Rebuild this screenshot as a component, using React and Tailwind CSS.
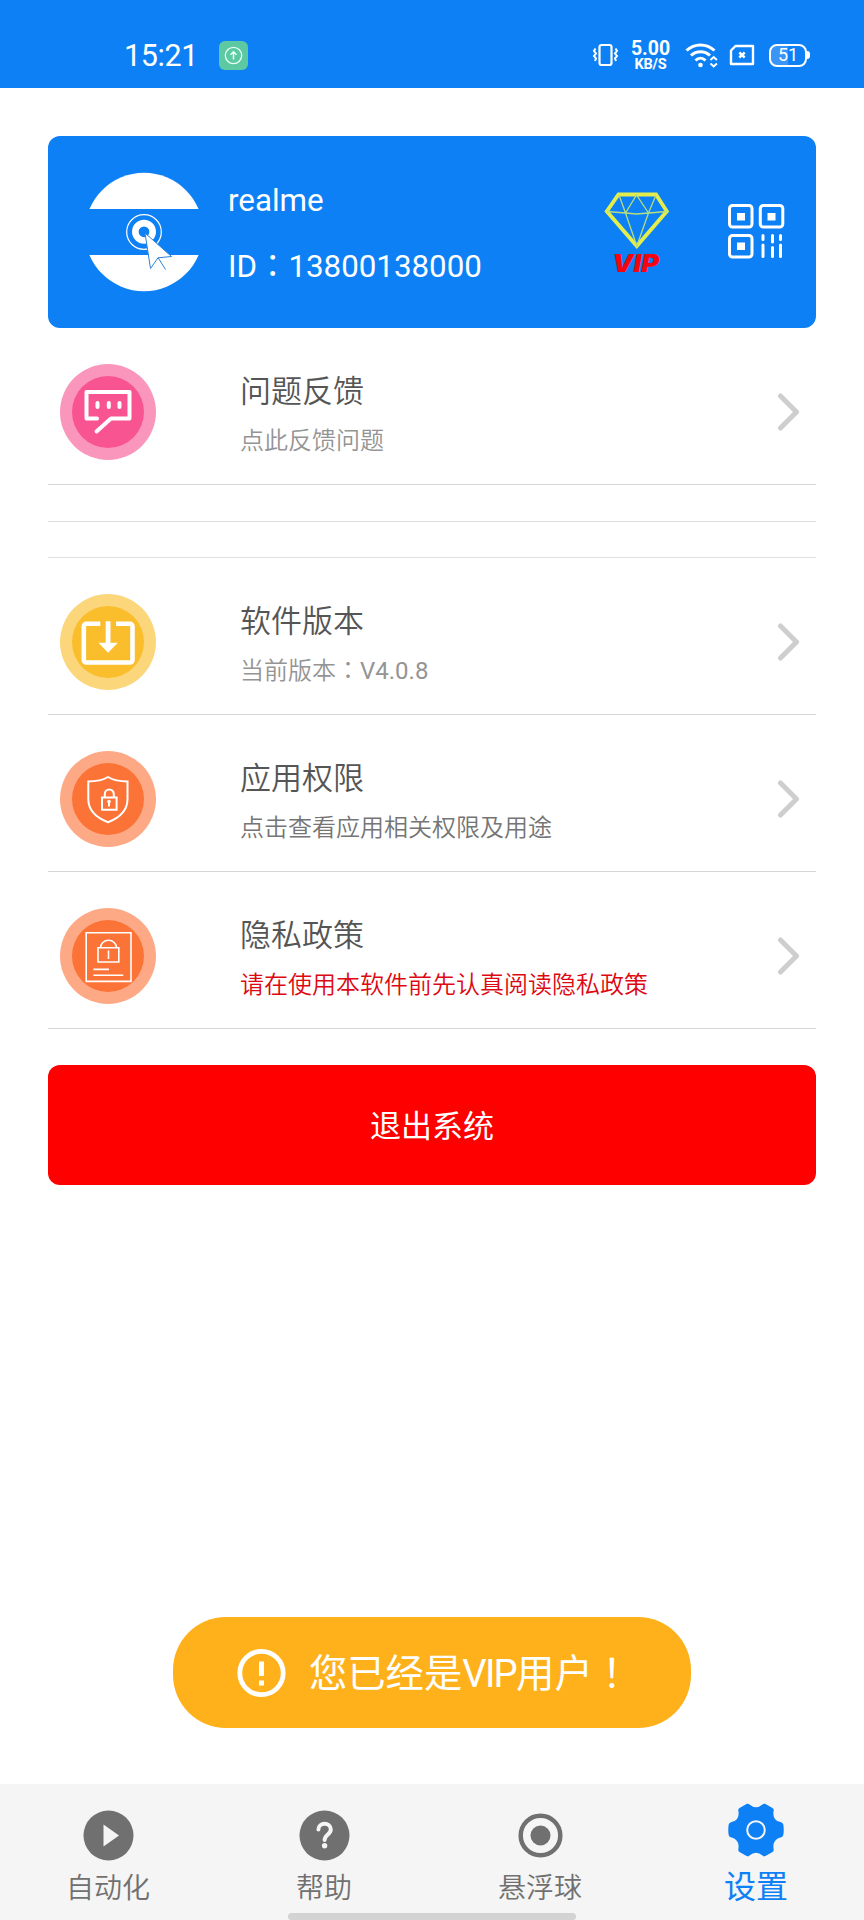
import React from 'react';

const menuItems = [
  { id: 'version', title: '软件版本', desc: <>当前版本<Mark>：</Mark><span className="font-normal">V4.0.8</span></>, descClass: 'text-[#949494]', icon: VersionIcon },
  { id: 'permission', title: '应用权限', desc: '点击查看应用相关权限及用途', descClass: 'text-[#757575]', icon: PermissionIcon },
  { id: 'privacy', title: '隐私政策', desc: '请在使用本软件前先认真阅读隐私政策', descClass: 'text-[#dd0812]', icon: PrivacyIcon },
];

// full-width punctuation, centered in its box
function Mark({ children }) {
  return <span className="font-['Noto_Sans_CJK_TC',sans-serif] leading-none" lang="zh-TW">{children}</span>;
}

function FeedbackIcon() {
  return (
    <svg className="w-24 h-24 shrink-0" viewBox="0 0 96 96" fill="none">
      <circle cx="48" cy="48" r="48" fill="#fa95bb" />
      <circle cx="48" cy="48" r="36" fill="#f95492" />
      <g stroke="#fff" strokeWidth="4" strokeLinecap="round" strokeLinejoin="round">
        <path d="M37 54.500H26.500V28H69.500V54.500H51L36.500 67.500" />
        <path d="M37.500 39v4M48.800 39v4M59.500 39v4" />
      </g>
    </svg>
  );
}

function VersionIcon() {
  return (
    <svg className="w-24 h-24 shrink-0" viewBox="0 0 96 96" fill="none">
      <circle cx="48" cy="48" r="48" fill="#fbd67b" />
      <circle cx="48" cy="48" r="36" fill="#fabd2c" />
      <path d="M40.300 29.800H26.300a2.500 2.500 0 0 0-2.500 2.500V66a2.500 2.500 0 0 0 2.500 2.500H70a2.500 2.500 0 0 0 2.500-2.500V32.300a2.500 2.500 0 0 0-2.500-2.500H56" stroke="#fff" strokeWidth="4.600" />
      <path d="M45.700 27.300h4.800v21.500h7.400L48.100 58.800l-9.600-10h7.200z" fill="#fff" />
    </svg>
  );
}

function PermissionIcon() {
  return (
    <svg className="w-24 h-24 shrink-0" viewBox="0 0 96 96" fill="none">
      <circle cx="48" cy="48" r="48" fill="#fda985" />
      <circle cx="48" cy="48" r="36" fill="#fb7336" />
      <g stroke="#fff" strokeWidth="2">
        <path d="M48 26C43 29 36 30.500 28.300 30.500V48C28.300 60 37 67 48 71.200C59 67 67.500 60 67.500 48V30.500C60 30.500 53 29 48 26Z" />
        <path d="M42 46.500h14.600v12.200H42zM44.800 46.500v-3.500a4.500 4.500 0 0 1 9 0v3.500" />
        <path d="M49 50v5.500" />
      </g>
      <circle cx="49" cy="50.500" r="1.800" fill="#fff" />
    </svg>
  );
}

function PrivacyIcon() {
  return (
    <svg className="w-24 h-24 shrink-0" viewBox="0 0 96 96" fill="none">
      <circle cx="48" cy="48" r="48" fill="#fda985" />
      <circle cx="48" cy="48" r="36" fill="#fb7336" />
      <g stroke="#fff" strokeWidth="1.600">
        <path d="M26.200 24.800h44.800v48.600H26.200z" />
        <path d="M38 39.800h20.800v14.200H38zM40.500 39.800a8 7.500 0 0 1 16 0M48.500 42.500v8.500" />
        <path d="M33.400 61.400H49M33.400 67.200H63.300" />
      </g>
    </svg>
  );
}

function Chevron() {
  return (
    <svg className="w-6 h-10 shrink-0" viewBox="0 0 24 40" fill="none">
      <path d="M4.500 4L20.500 20L4.500 36" stroke="#cecece" strokeWidth="5" strokeLinecap="round" strokeLinejoin="round" />
    </svg>
  );
}

function MenuRow({ icon: Icon, title, desc, descClass }) {
  return (
    <div className="flex h-[157px] items-center border-b border-[#d6d6d6] pt-3 pl-3 pr-4">
      <Icon />
      <div className="ml-[84px] flex flex-1 flex-col pt-[9px] font-[350]">
        <h2 className="text-[31px] leading-[46px] text-[#555555]">{title}</h2>
        <p className={`mt-[3px] text-[24px] leading-[46px] ${descClass}`}>{desc}</p>
      </div>
      <Chevron />
    </div>
  );
}

function StatusBar() {
  return (
    <div className="flex h-[88px] items-center bg-[#0d80f5] pt-[22px] pl-[124px] pr-[54px] text-white">
      <span className="w-[95px] pt-0.5 text-[30.500px] leading-none tracking-[-0.400px]">15:21</span>
      <svg className="h-[29px] w-[29px]" viewBox="0 0 29 29" fill="none">
        <rect width="29" height="29" rx="6" fill="#5cc9a2" />
        <circle cx="14.500" cy="14.500" r="8.200" stroke="#e6fff5" strokeWidth="1.300" />
        <path d="M14.500 18.500v-7.500M11.500 13.800l3-3 3 3" stroke="#e6fff5" strokeWidth="1.500" />
      </svg>

      <svg className="ml-auto h-[24px] w-[27px]" viewBox="0 0 27 24" fill="none" stroke="#fff">
        <rect x="7.500" y="2" width="12" height="20" rx="2" strokeWidth="2.200" />
        <path d="M3.500 5.500L2 8l2 2.500-2 2.500 2 2.500-1 2.500M23.500 5.500l1.500 2.500-2 2.500 2 2.500-2 2.500 1 2.500" strokeWidth="2" />
      </svg>
      <div className="ml-3 flex w-[39px] flex-col items-center font-bold">
        <span className="text-[19.500px] leading-[18px]">5.00</span>
        <span className="text-[14.500px] leading-[13px] tracking-[-0.200px]">KB/S</span>
      </div>
      <svg className="ml-[15px] h-[26px] w-[33px]" viewBox="0 0 33 26" fill="none" stroke="#fff" strokeWidth="3">
        <path d="M1.500 8.500C9.500 1 21.500 1 29.500 8.500" />
        <path d="M6 13.500C11.500 8.500 19.500 8.500 25 13.500" />
        <path d="M10.500 18.500C13.500 15.500 17.500 15.500 20.500 18.500" />
        <circle cx="15.500" cy="23" r="2.300" fill="#fff" stroke="none" />
        <path d="M25.500 18l3.200-3 3.200 3M25.500 21.500l3.200 3 3.200-3" strokeWidth="2" />
      </svg>
      <svg className="ml-[11px] h-[22px] w-[26px]" viewBox="0 0 26 22" fill="none" stroke="#fff">
        <path d="M6.500 2H24v18H2V6.500z" strokeWidth="2.400" strokeLinejoin="round" />
        <path d="M10.300 8.500l5.400 5M15.700 8.500l-5.400 5" strokeWidth="2.400" />
      </svg>
      <div className="ml-[14px] flex items-center">
        <div className="flex h-[23px] w-[38px] items-center justify-center rounded-[8px] border-2 border-white bg-[linear-gradient(90deg,#3a95f7_50%,#0d80f5_50%)] text-[18px] leading-none">51</div>
        <div className="h-2 w-[3px] rounded-r-full bg-white" />
      </div>
    </div>
  );
}

function ProfileCard() {
  return (
    <div className="flex h-48 items-center rounded-xl bg-[#0d80f5] pl-[37px] pr-[31px] text-white">
      <svg className="h-[120px] w-[118px]" viewBox="85 172 118 120">
        <circle cx="144" cy="232" r="59.200" fill="#fff" />
        <rect x="85" y="209" width="118" height="46" fill="#0d80f5" />
        <circle cx="144" cy="232" r="17.300" fill="none" stroke="#fff" strokeWidth="1.200" />
        <circle cx="144" cy="231.800" r="8.700" fill="none" stroke="#fff" strokeWidth="6.600" />
        <path d="M145 233L150.500 268.500L158 257.800L171.500 256.500Z" fill="#fff" stroke="#2d83d6" strokeWidth="1" />
        <path d="M158 257.500L165.500 269.500" stroke="#2d83d6" strokeWidth="1" />
      </svg>
      <div className="ml-[25px] flex flex-1 flex-col pt-1 text-[31.300px] leading-[46px]">
        <span>realme</span>
        <span className="mt-5">ID<Mark>：</Mark>13800138000</span>
      </div>
      <svg className="h-[84px] w-[68px] overflow-visible" viewBox="603 190 68 84" fill="none">
        <path d="M618.500 194.500H656L666.800 211.300L636.800 246L606.800 211.300Z" stroke="#e3ee4d" strokeWidth="3.800" />
        <path d="M607 211.500L625.500 213L636.500 214L648.500 213L667 211.500M619 195L625.500 213L636.500 195L648.500 213L656 195M625.500 213L636.800 246L648.500 213" stroke="#b4de80" strokeWidth="1.300" />
        <text x="612" y="271.500" fill="#f5060f" fontFamily="Inter, sans-serif" fontSize="24" fontWeight="900" fontStyle="italic" textLength="47" lengthAdjust="spacingAndGlyphs">VIP</text>
      </svg>
      <svg className="ml-[56px] h-[58px] w-[58px]" viewBox="727 203 58 58" fill="none" stroke="#fff">
        <rect x="729.500" y="205.500" width="22.500" height="21.500" rx="3" strokeWidth="3" />
        <rect x="760.300" y="205.500" width="22.500" height="21.500" rx="3" strokeWidth="3" />
        <rect x="729.500" y="235.500" width="22.500" height="21.500" rx="3" strokeWidth="3" />
        <path d="M737 213h8v7.500h-8zM767.500 213h8v7.500h-8zM737 242.500h8v7.500h-8z" fill="#fff" stroke="none" />
        <path d="M763 235.500v4M763 245v11.500M772.500 235.500v6.500M772.500 247.500v9M780.500 235.500v4M780.500 245v11.500" strokeWidth="3" strokeLinecap="round" />
      </svg>
    </div>
  );
}

function Toast() {
  return (
    <div className="absolute top-[1617px] left-[173px] flex h-[111px] w-[518px] items-center rounded-[53px] bg-[#ffb11b] pl-16 text-white">
      <svg className="h-[50px] w-[50px]" viewBox="0 0 50 50" fill="none">
        <circle cx="24.500" cy="25" r="21.700" stroke="#fff" strokeWidth="4.800" />
        <path d="M22 13.500h5V28h-5zM22 32.500h5v5h-5z" fill="#fff" />
      </svg>
      <span className="ml-[22px] pt-0.5 whitespace-nowrap text-[38.300px] leading-[50px]">
        您已经是<span className="tracking-[-1.700px]">VIP</span>用户<Mark>！</Mark>
      </span>
    </div>
  );
}

function TabBar() {
  return (
    <nav className="relative grid h-[136px] grid-cols-4 bg-[#f5f5f5] text-[28px] leading-[40px] font-[350] text-[#707070]">
      <div className="flex flex-col items-center pt-[26px]">
        <svg className="h-[51px] w-[51px]" viewBox="0 0 51 51">
          <circle cx="25.500" cy="25.500" r="25" fill="#707070" />
          <path d="M20.500 14.500L36 25.500L20.500 36.500z" fill="#f5f5f5" />
        </svg>
        <span className="mt-2">自动化</span>
      </div>
      <div className="flex flex-col items-center pt-[26px]">
        <svg className="h-[51px] w-[51px]" viewBox="0 0 51 51" fill="none">
          <circle cx="25.500" cy="25.500" r="25" fill="#707070" />
          <path d="M19.400 19.500C19.400 11.800 31.800 11.800 31.800 19.500C31.800 24.500 25.600 24.500 25.600 30" stroke="#f5f5f5" strokeWidth="4" strokeLinecap="round" />
          <circle cx="25.600" cy="35.800" r="2.700" fill="#f5f5f5" />
        </svg>
        <span className="mt-2">帮助</span>
      </div>
      <div className="flex flex-col items-center pt-[26px]">
        <svg className="h-[51px] w-[51px]" viewBox="0 0 51 51" fill="none">
          <circle cx="25.500" cy="25.500" r="19.800" stroke="#707070" strokeWidth="4.500" />
          <circle cx="25.500" cy="25.500" r="10" fill="#707070" />
        </svg>
        <span className="mt-2">悬浮球</span>
      </div>
      <div className="flex flex-col items-center pt-[18px] text-[#0d80f5]">
        <svg className="h-[56px] w-[56px]" viewBox="0 0 56 56" fill="none">
          <path d="M19 1.800Q20.300 1.300 21.500 2.500Q28 8 34.500 2.500Q35.700 1.300 37 1.800L44.500 6Q46 7 45.700 8.500C44.500 15 47 19 52.500 20Q55 20.500 55.300 22.500Q56.200 28 55.300 33Q55 35 52.500 35.500C47 37 44.500 41 45.700 47.500Q46 49 44.500 50L37 54.200Q35.700 54.700 34.500 53.500Q28 48 21.500 53.500Q20.300 54.700 19 54.200L11.500 50Q10 49 10.300 47.500C11.500 41 9 37 3.500 35.500Q1 35 .700 33Q-.200 28 .700 22.500Q1 20.500 3.500 20C9 19 11.500 15 10.300 8.500Q10 7 11.500 6Z" fill="#0d80f5" />
          <circle cx="28" cy="28" r="8.800" stroke="#f5f5f5" strokeWidth="2" />
        </svg>
        <span className="mt-[9px] text-[32px] font-normal">设置</span>
      </div>
      <div className="absolute bottom-0 left-72 h-[7px] w-72 rounded-full bg-[#d3d3d3]" />
    </nav>
  );
}

function App() {
  return (
    <div className="relative flex h-[1920px] w-[864px] flex-col overflow-hidden bg-white font-[Roboto,'Noto_Sans_CJK_SC',sans-serif]">
      <StatusBar />
      <main className="flex-1 px-12 pt-12">
        <ProfileCard />
        <MenuRow icon={FeedbackIcon} title="问题反馈" desc="点此反馈问题" descClass="text-[#949494]" />
        <div className="h-[37px] border-b border-[#dedede]" />
        <div className="h-[36px] border-b border-[#e0e0e0]" />
        {menuItems.map(item => (
          <MenuRow key={item.id} {...item} />
        ))}
        <button className="mt-9 h-[120px] w-full rounded-xl bg-[#fe0000] pt-[5px] text-[31px] text-white">退出系统</button>
      </main>
      <TabBar />
      <Toast />
    </div>
  );
}

export default App;
